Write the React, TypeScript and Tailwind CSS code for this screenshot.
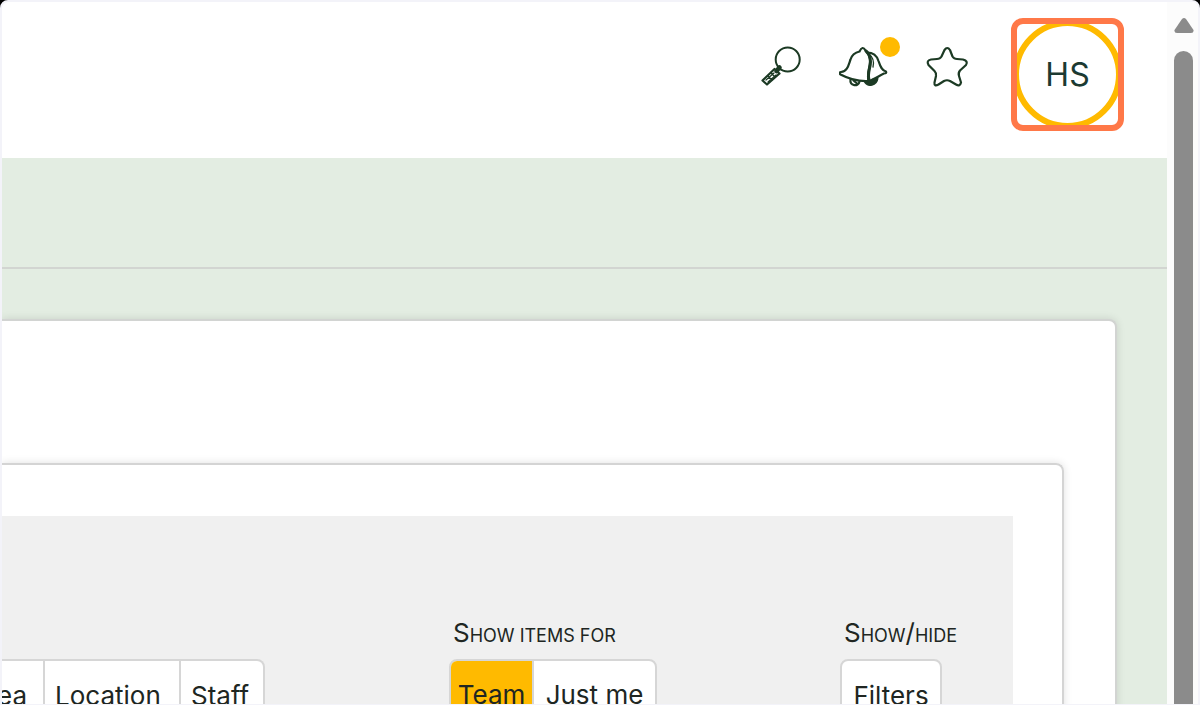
import type { ReactNode } from 'react'

function SearchIcon() {
  return (
    <svg viewBox="0 0 44 44" className="h-11 w-11" fill="none" stroke="#1c3a24" strokeWidth="2" strokeLinejoin="round" strokeLinecap="round" aria-hidden="true">
      <circle cx="28.700" cy="13.500" r="12" />
      <path d="M20.500 21.500 17.500 25" strokeWidth="4.500" />
      <path d="M15.500 23 20.500 27.500 8 38.500 3.500 34.500Z" strokeWidth="2.200" />
      <path d="M15 27 7 34M17 29 9 36M12 27l4 4M9 30l4 4" strokeWidth="1.200" />
    </svg>
  )
}

function BellIcon() {
  return (
    <svg viewBox="0 0 50 44" className="h-11 w-[50px]" fill="none" stroke="#1c3a24" strokeWidth="2.200" strokeLinejoin="round" strokeLinecap="round" aria-hidden="true">
      <path d="M20.500 5.500Q23.500-1 26.500 4.500C29 6.500 30.500 9 31 14C31.500 21 27.500 26 29.500 35C20 35.500 10 33 1.500 28.500Q-.5 26.500 2 26C8.500 25.500 9.500 19 11.500 13.500Q13.500 7 20.500 5.500Z" />
      <path d="M27 5C30.500 8 31.500 11 31.500 16C31.500 22 28 27 30 34" strokeWidth="3" />
      <path d="M28 6.500C35 6.500 38 10 39.500 15C41.500 21 43 24.500 47 25.500Q48 27.500 45 27.500C40 29.500 35 34 29.500 35" />
      <path d="M30 8C35 12 35 17 34 21" strokeWidth="1.300" />
      <path d="M11.500 33C10.500 40.500 19.500 41 20.500 35.500M14.500 34.500l3.500 3" />
      <path d="M26.500 36C29 40 37 39 38 32.500M30 37l5-3.500" strokeWidth="3" />
    </svg>
  )
}

function StarIcon() {
  return (
    <svg viewBox="0 0 44 44" className="h-11 w-11" fill="none" stroke="#1c3a24" strokeWidth="2.200" strokeLinejoin="round" aria-hidden="true">
      <path d="M19.500 4Q22.300 0 25 4L27.500 10.500Q29 13 32 13L38 13.500Q43.500 15 41 19L35 24.500Q33 27 34 30L36 36.500Q35 41 31 38.500L25 35Q22 33.500 19 35L13.500 38.500Q9 41 9.500 36.500L11 30Q11.500 27 9.500 25L3.500 19Q1 14.500 6 13.500L12 13Q15 13 16.500 10.500Z" />
    </svg>
  )
}

function Group({ label, children }: { label: string; children: ReactNode }) {
  return (
    <div role="group" aria-label={label} className="flex w-max overflow-hidden rounded-lg border-2 border-[#d6d6d6] bg-white">
      {children}
    </div>
  )
}

function Caption({ children }: { children: ReactNode }) {
  return <h2 className="mb-2 h-9 pl-1 text-[18px] leading-9 whitespace-nowrap uppercase first-letter:text-[26px]">{children}</h2>
}

export default function App() {
  return (
    <div className="h-screen overflow-hidden bg-black font-['Inter','Liberation_Sans',sans-serif] text-[#202622]">
      <div className="flex h-full overflow-hidden rounded-t-lg border-2 border-b border-[#f3f3f9] bg-white">
        <div className="min-w-0 flex-1 overflow-hidden">
          <header className="flex h-[156px] items-start justify-end pt-4 pr-[43px]">
            <nav aria-label="Account" className="flex items-start">
              <button type="button" aria-label="Search" className="mt-7 mr-9">
                <SearchIcon />
              </button>
              <button type="button" aria-label="Notifications" className="relative mt-7 mr-9">
                <BellIcon />
                <span className="absolute -top-[9px] -right-[11px] h-5 w-5 rounded-full bg-[#ffba00]" />
              </button>
              <button type="button" aria-label="Favourites" className="mt-7 mr-[42px]">
                <StarIcon />
              </button>
              <button type="button" className="h-[113px] w-[113px] overflow-hidden rounded-xl border-6 border-[#ff7848]">
                <span className="-m-1 flex h-[109px] w-[109px] items-center justify-center rounded-full border-6 border-[#ffba00] text-[32px] text-[#1c3a32]">
                  HS
                </span>
              </button>
            </nav>
          </header>
          <main className="bg-[#e3ede2] pr-[50px]">
            <div className="-mr-[50px] mb-[50px] h-[111px] border-b-2 border-[#d2d5d1]" />
            <section className="rounded-tr-lg border-t-2 border-r-2 border-[#d2d4d2] bg-white pt-[142px] pr-[51px] shadow-[0_0_8px_rgba(0,0,0,0.12)]">
              <div className="rounded-tr-lg border-t-2 border-r-2 border-[#d4d4d4] pt-[51px] pr-[49px] shadow-[0_0_8px_rgba(0,0,0,0.12)]">
                <div className="grid grid-cols-[minmax(0,1fr)_391px_173px] bg-[#f0f0f0] pt-[99px] pb-10 text-[26px]">
                  <div className="overflow-hidden pt-11">
                    <div role="group" aria-label="Group by" className="flex w-max overflow-hidden rounded-r-lg border-y-2 border-r-2 border-[#d6d6d6] bg-white">
                      <button type="button" className="flex h-[68px] w-[43px] items-center justify-end border-r-2 border-[#d6d6d6] pr-4">
                        Area
                      </button>
                      <button type="button" className="w-[136px] border-r-2 border-[#d6d6d6] pl-2.5 text-left">Location</button>
                      <button type="button" className="w-[82px] pl-2.5 text-left">Staff</button>
                    </div>
                  </div>
                  <div>
                    <Caption>Show items for</Caption>
                    <Group label="Show items for">
                      <button type="button" aria-pressed="true" className="h-[66px] w-[83px] border-r-2 border-[#d6d6d6] bg-[#ffba00]">Team</button>
                      <button type="button" aria-pressed="false" className="w-[121px] whitespace-nowrap">Just me</button>
                    </Group>
                  </div>
                  <div>
                    <Caption>
                      Show<span className="text-[26px]">/</span>hide
                    </Caption>
                    <Group label="Show or hide">
                      <button type="button" className="h-[68px] w-[98px]">Filters</button>
                    </Group>
                  </div>
                </div>
              </div>
            </section>
          </main>
        </div>
        <div aria-hidden="true" className="flex w-[31px] shrink-0 flex-col items-center bg-[#fcfcfc] pt-4 pr-[5px] pl-[7px]">
          <svg viewBox="0 0 20 16" className="h-4 w-5 shrink-0" fill="#8b8b8b">
            <path d="M8 1Q10-1 12 1L19.500 12Q20 15 17 15H3Q0 15 .5 12Z" />
          </svg>
          <div className="mt-[17px] w-[19px] flex-1 rounded-t-[10px] bg-[#8b8b8b]" />
        </div>
      </div>
    </div>
  )
}
